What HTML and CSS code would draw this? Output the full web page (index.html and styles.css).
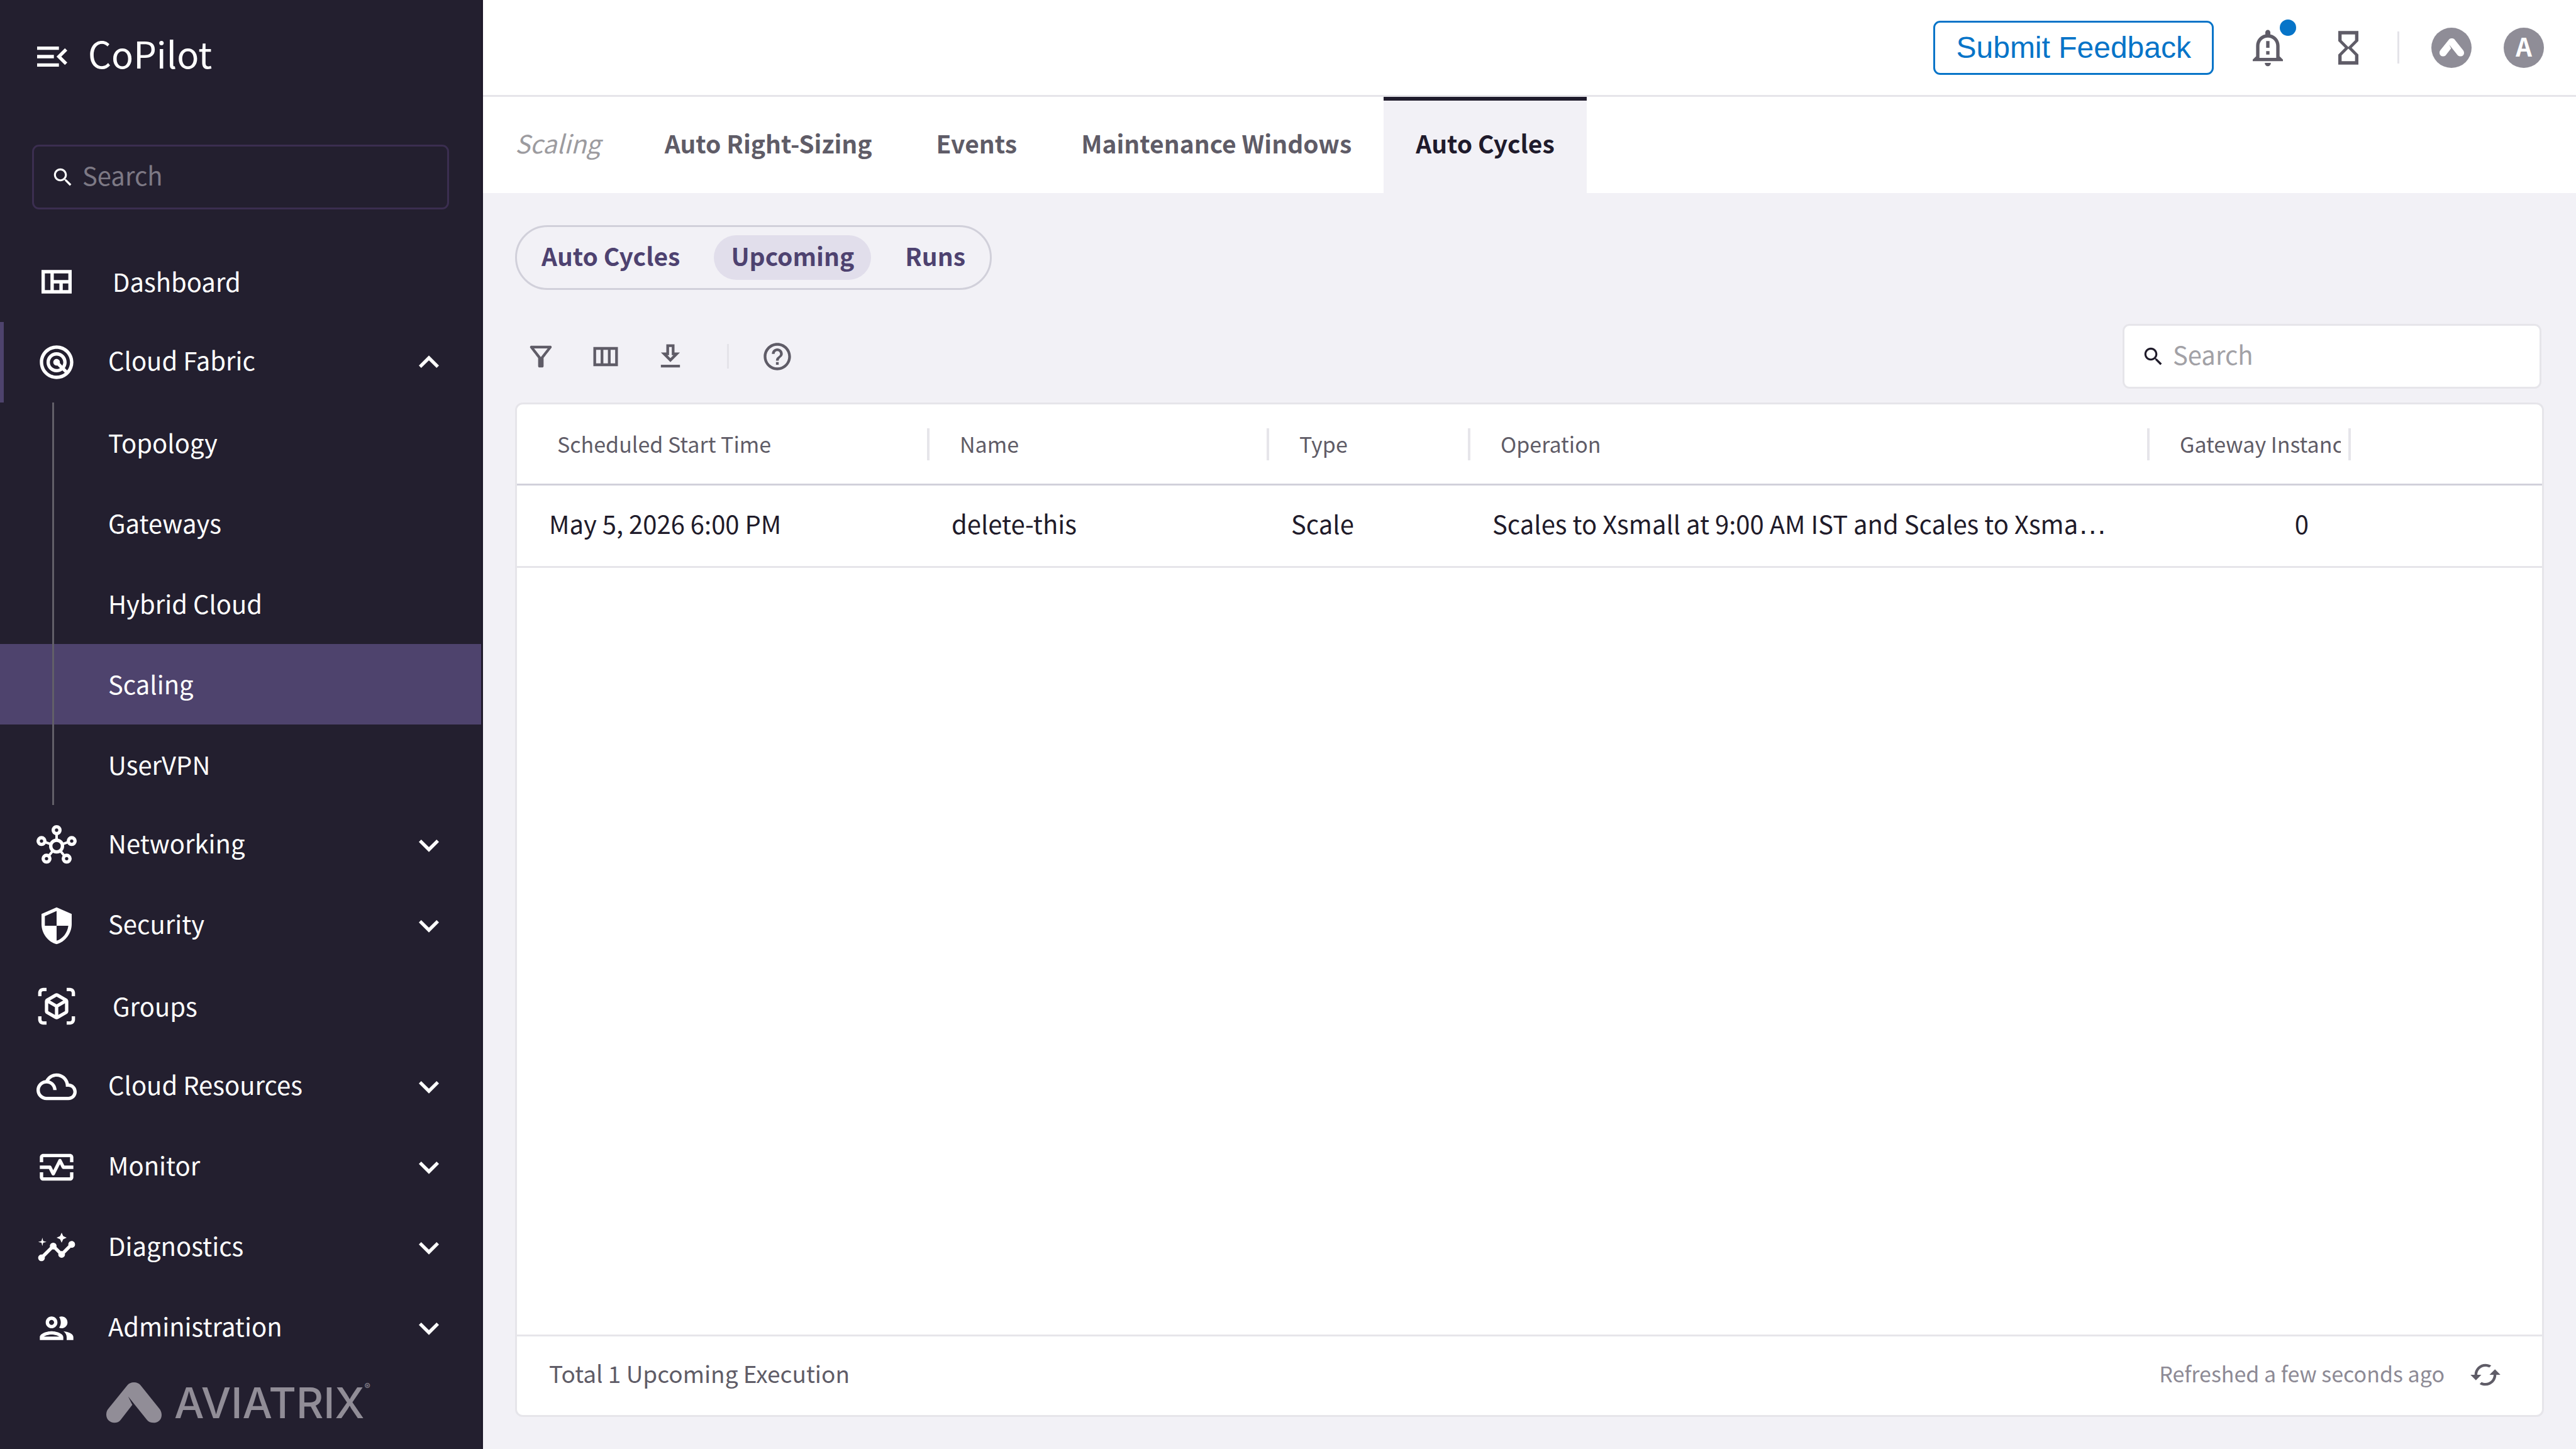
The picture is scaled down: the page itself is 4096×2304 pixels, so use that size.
FILE: index.html
```html
<!DOCTYPE html>
<html lang="en">
<head>
<meta charset="utf-8">
<title>CoPilot – Scaling</title>
<link rel="stylesheet" href="styles.css">
</head>
<body>
<svg class="defs" aria-hidden="true">
  <symbol id="search" viewBox="0 0 24 24"><path d="M15.5 14h-.79l-.28-.27C15.41 12.59 16 11.11 16 9.5 16 5.91 13.09 3 9.5 3S3 5.91 3 9.5 5.91 16 9.5 16c1.61 0 3.09-.59 4.23-1.57l.27.28v.79l5 4.99L20.49 19l-4.99-5zm-6 0C7.01 14 5 11.99 5 9.5S7.01 5 9.5 5 14 7.01 14 9.5 11.99 14 9.5 14z"/></symbol>
  <symbol id="chevron-down" viewBox="0 0 24 24"><path d="M7.41 8.59 12 13.17l4.59-4.58L18 10l-6 6-6-6z"/></symbol>
  <symbol id="chevron-up" viewBox="0 0 24 24"><path d="M12 8l-6 6 1.41 1.41L12 10.83l4.59 4.58L18 14z"/></symbol>
  <symbol id="mark" viewBox="0 0 88 65"><path d="M44 0C48.500 0 52 1.500 54.400 4.500L84.500 42C87 45 88 48.500 88 52C88 59 82.500 64.300 75.500 64.300C71 64.300 67 62.800 64.500 59.500L34.800 22.400L41.400 35.700L23 59.500C20.500 62.800 17 64.300 13 64.300C5.500 64.300 0 58.500 0 51.500C0 47.500 1 44.500 3.200 42L33.600 4.500C36 1.500 39.500 0 44 0Z"/></symbol>
</svg>
<div class="app">
  <aside class="sidebar">
    <div class="brand">
      <button class="icon-button" aria-label="Collapse menu"><svg class="icon" viewBox="0 0 24 24"><path d="M3 18h13v-2H3v2zm0-5h10v-2H3v2zm0-7v2h13V6H3zm18 9.590L17.420 12 21 8.410 19.590 7l-5 5 5 5L21 15.590z"/></svg></button>
      <span class="brand-name">CoPilot</span>
    </div>
    <label class="search search-dark">
      <svg class="search-icon"><use href="#search"/></svg>
      <input type="search" placeholder="Search" aria-label="Search menu">
    </label>
    <nav class="nav" aria-label="Main">
      <a class="nav-item nav-single" href="#dashboard"><svg class="icon" viewBox="0 0 24 24"><path d="M3 5v14h18V5H3zm2 12V7h3.330v10H5zm5.330 0v-4h3.330v4h-3.330zm5.340 0v-4H19v4h-3.330zM10.330 11V7H19v4h-8.670z"/></svg><span class="label">Dashboard</span></a>
      <button class="nav-item nav-open" aria-expanded="true"><svg class="icon" viewBox="0 0 24 24"><path d="M19.740 18.330C21.150 16.600 22 14.400 22 12c0-5.520-4.480-10-10-10S2 6.480 2 12s4.480 10 10 10c2.400 0 4.600-.85 6.330-2.260.27-.22.53-.46.78-.71.03-.03.05-.06.07-.08.2-.2.390-.410.560-.620zM12 20c-4.410 0-8-3.590-8-8s3.590-8 8-8 8 3.590 8 8c0 1.850-.63 3.540-1.690 4.900l-1.430-1.430c.69-.98 1.100-2.170 1.100-3.460 0-3.310-2.690-6-6-6s-6 2.690-6 6 2.690 6 6 6c1.300 0 2.510-.42 3.490-1.130l1.420 1.420C15.540 19.370 13.850 20 12 20zm1.920-7.490c.17-.66.02-1.380-.49-1.900l-.02-.02c-.77-.77-2-.78-2.780-.04-.01.01-.03.02-.05.04-.78.78-.78 2.050 0 2.830l.02.02c.52.51 1.250.67 1.910.49l1.510 1.510c-.6.36-1.290.58-2.040.58-2.210 0-4-1.790-4-4s1.790-4 4-4 4 1.790 4 4c0 .73-.21 1.410-.56 2l-1.500-1.510z"/></svg><span class="label">Cloud Fabric</span><svg class="icon"><use href="#chevron-up"/></svg></button>
      <div class="subnav">
        <a href="#topology">Topology</a>
        <a href="#gateways">Gateways</a>
        <a href="#hybrid-cloud">Hybrid Cloud</a>
        <a class="current" href="#scaling" aria-current="page">Scaling</a>
        <a href="#uservpn">UserVPN</a>
      </div>
      <button class="nav-item"><svg class="icon" viewBox="0 0 24 24"><g fill="none" stroke="currentColor" stroke-width="2"><circle cx="12" cy="12.500" r="3.500"/><circle cx="12" cy="3" r="2"/><circle cx="3" cy="9.500" r="2"/><circle cx="21" cy="9.500" r="2"/><circle cx="6" cy="20" r="2"/><circle cx="18" cy="20" r="2"/><path stroke-width="1.500" d="M12 5.500V8.500M5.500 10.300l2.900 1M18.500 10.300l-2.900 1M7.700 17.900l2-2.500M16.300 17.900l-2-2.500"/></g></svg><span class="label">Networking</span><svg class="icon"><use href="#chevron-down"/></svg></button>
      <button class="nav-item"><svg class="icon" viewBox="0 0 24 24"><path d="M12 1L3 5v6c0 5.550 3.840 10.740 9 12 5.160-1.260 9-6.450 9-12V5l-9-4zm0 10.990h7c-.53 4.120-3.280 7.790-7 8.940V12H5V6.300l7-3.110v8.800z"/></svg><span class="label">Security</span><svg class="icon"><use href="#chevron-down"/></svg></button>
      <a class="nav-item nav-single" href="#groups"><svg class="icon" viewBox="0 0 24 24"><path d="M3 4c0-.55.45-1 1-1h2V1H4C2.340 1 1 2.340 1 4v2h2V4zM3 20v-2H1v2c0 1.660 1.340 3 3 3h2v-2H4c-.55 0-1-.45-1-1zM20 1h-2v2h2c.55 0 1 .45 1 1v2h2V4c0-1.660-1.340-3-3-3zM21 20c0 .55-.45 1-1 1h-2v2h2c1.660 0 3-1.340 3-3v-2h-2v2zM19 14.870V9.130c0-.72-.38-1.380-1-1.730l-5-2.880c-.31-.18-.65-.27-1-.27s-.69.09-1 .27L6 7.390c-.62.36-1 1.020-1 1.740v5.740c0 .72.38 1.380 1 1.730l5 2.880c.31.18.65.27 1 .27s.69-.09 1-.27l5-2.880c.62-.35 1-1.010 1-1.730zm-8 2.300l-4-2.300v-4.630l4 2.330v4.600zm1-6.330L8.040 8.530 12 6.250l3.960 2.280L12 10.840zm5 4.030l-4 2.300v-4.600l4-2.330v4.630z"/></svg><span class="label">Groups</span></a>
      <button class="nav-item"><svg class="icon" viewBox="0 0 24 24"><path d="M19.350 10.040C18.670 6.590 15.640 4 12 4 9.110 4 6.610 5.640 5.360 8.040 2.350 8.360 0 10.900 0 14c0 3.310 2.690 6 6 6h13c2.760 0 5-2.240 5-5 0-2.640-2.050-4.780-4.650-4.960zM19 18H6c-2.210 0-4-1.790-4-4s1.790-4 4-4 4 1.790 4 4h2c0-2.760-1.860-5.080-4.400-5.780C8.610 6.880 10.200 6 12 6c3.030 0 5.500 2.470 5.500 5.500v.5H19c1.650 0 3 1.350 3 3s-1.350 3-3 3z"/></svg><span class="label">Cloud Resources</span><svg class="icon"><use href="#chevron-down"/></svg></button>
      <button class="nav-item"><svg class="icon" viewBox="0 0 24 24"><path d="M20 4H4c-1.100 0-2 .9-2 2v3h2V6h16v3h2V6c0-1.100-.9-2-2-2zm0 14H4v-3H2v3c0 1.100.9 2 2 2h16c1.100 0 2-.9 2-2v-3h-2v3zM14.890 7.550c-.34-.68-1.450-.68-1.790 0L10 13.760l-1.110-2.210C8.720 11.210 8.380 11 8 11H2v2h5.380l1.720 3.450c.18.34.52.55.9.55s.72-.21.89-.55L14 10.240l1.110 2.210c.17.34.51.55.89.55h6v-2h-5.380l-1.730-3.450z"/></svg><span class="label">Monitor</span><svg class="icon"><use href="#chevron-down"/></svg></button>
      <button class="nav-item"><svg class="icon" viewBox="0 0 24 24"><path d="M21 8c-1.450 0-2.260 1.440-1.930 2.510l-3.550 3.560c-.3-.09-.74-.09-1.040 0l-2.550-2.550C12.270 10.450 11.460 9 10 9c-1.450 0-2.270 1.440-1.930 2.520l-4.560 4.550C2.440 15.740 1 16.550 1 18c0 1.100.9 2 2 2 1.450 0 2.260-1.440 1.930-2.510l4.550-4.560c.3.09.74.09 1.040 0l2.550 2.550C12.730 16.550 13.540 18 15 18c1.450 0 2.270-1.440 1.930-2.520l3.560-3.550C21.560 12.260 23 11.450 23 10c0-1.100-.9-2-2-2zM15 9l.94-2.070L18 6l-2.060-.93L15 3l-.92 2.070L12 6l2.080.93zM3.500 11L4 9l2-.5L4 8l-.5-2L3 8l-2 .5L3 9z"/></svg><span class="label">Diagnostics</span><svg class="icon"><use href="#chevron-down"/></svg></button>
      <button class="nav-item"><svg class="icon" viewBox="0 0 24 24"><path d="M9 13.750c-2.340 0-7 1.170-7 3.500V19h14v-1.750c0-2.330-4.660-3.500-7-3.500zM4.340 17c.84-.58 2.870-1.250 4.660-1.250s3.820.67 4.660 1.250H4.340zM9 12c1.930 0 3.500-1.570 3.500-3.500S10.930 5 9 5 5.500 6.570 5.500 8.500 7.070 12 9 12zm0-5c.83 0 1.500.67 1.500 1.500S9.830 10 9 10s-1.500-.67-1.500-1.500S8.170 7 9 7zm7.040 6.810c1.160.84 1.960 1.960 1.960 3.440V19h4v-1.750c0-2.020-3.500-3.170-5.960-3.440zM15 12c1.930 0 3.500-1.570 3.500-3.500S16.930 5 15 5c-.54 0-1.040.13-1.500.35.63.89 1 1.980 1 3.150s-.37 2.260-1 3.150c.46.22.96.35 1.500.35z"/></svg><span class="label">Administration</span><svg class="icon"><use href="#chevron-down"/></svg></button>
    </nav>
    <div class="logo">
      <svg class="logo-mark"><use href="#mark"/></svg>
      <span class="logo-name">AVIATRIX<sup>®</sup></span>
    </div>
  </aside>
  <div class="page">
    <header class="topbar">
      <div class="topbar-actions">
        <button class="feedback">Submit Feedback</button>
        <div class="topbar-icons">
          <button class="icon-button bell" aria-label="Notifications"><svg class="icon" viewBox="0 0 24 24"><path fill-rule="evenodd" d="M12 1.300c-.83 0-1.500.67-1.500 1.500V4C7.400 4.600 5 7.400 5 10.800v6.300L3 19v1h18v-1l-2-1.900v-6.300C19 7.400 16.600 4.600 13.500 4V2.800c0-.83-.67-1.500-1.500-1.500zM17 18H7v-7.100c0-2.800 2.200-5 5-5s5 2.200 5 5V18zM11 8h2v4h-2zM11 14h2v2h-2zM10.200 21h3.600c0 1.200-.8 2-1.800 2s-1.800-.8-1.800-2z"/></svg></button>
          <button class="icon-button" aria-label="Tasks"><svg class="icon" viewBox="0 0 24 24"><path d="M6 2v6h.01L6 8.010 10 12l-4 4 .01.01H6V22h12v-5.990h-.01L18 16l-4-4 4-3.990-.01-.01H18V2H6zm10 14.500V20H8v-3.500l4-4 4 4zm-4-5l-4-4V4h8v3.500l-4 4z"/></svg></button>
        </div>
      </div>
      <div class="account">
        <span class="divider divider-tall"></span>
        <button class="avatar" aria-label="Aviatrix"><svg class="avatar-mark"><use href="#mark"/></svg></button>
        <button class="avatar avatar-letter">A</button>
      </div>
    </header>
    <nav class="tabs" aria-label="Scaling">
      <span class="tab tab-title">Scaling</span>
      <a class="tab" href="#right-sizing">Auto Right-Sizing</a>
      <a class="tab" href="#events">Events</a>
      <a class="tab" href="#maintenance">Maintenance Windows</a>
      <a class="tab tab-active" href="#auto-cycles" aria-current="page">Auto Cycles</a>
    </nav>
    <main class="content">
      <div class="segments">
        <button class="segment">Auto Cycles</button>
        <button class="segment segment-active">Upcoming</button>
        <button class="segment">Runs</button>
      </div>
      <div class="toolbar">
        <div class="tools">
          <button class="icon-button" aria-label="Filter"><svg class="icon-small" viewBox="0 0 24 24"><path d="M7 6h10l-5.010 6.300L7 6zm-2.750-.39C6.270 8.200 10 13 10 13v6c0 .55.45 1 1 1h2c.55 0 1-.45 1-1v-6s3.720-4.800 5.740-7.390c.51-.66.04-1.610-.79-1.610H5.040c-.83 0-1.300.95-.79 1.610z"/></svg></button>
          <button class="icon-button" aria-label="Columns"><svg class="icon-small" viewBox="0 0 24 24"><path d="M3 5v14h18V5H3zm5.330 12H5V7h3.330v10zm5.340 0h-3.330V7h3.330v10zM19 17h-3.330V7H19v10z"/></svg></button>
          <button class="icon-button" aria-label="Download"><svg class="icon-small" viewBox="0 0 24 24"><path d="M19 9h-4V3H9v6H5l7 7 7-7zm-8 2V5h2v6h1.170L12 13.170 9.830 11H11zm-6 7h14v2H5z"/></svg></button>
        </div>
        <span class="divider"></span>
        <button class="icon-button" aria-label="Help"><svg class="icon-small" viewBox="0 0 24 24"><path d="M11 18h2v-2h-2v2zm1-16C6.480 2 2 6.480 2 12s4.480 10 10 10 10-4.480 10-10S17.520 2 12 2zm0 18c-4.410 0-8-3.590-8-8s3.590-8 8-8 8 3.590 8 8-3.590 8-8 8zm0-14c-2.210 0-4 1.790-4 4h2c0-1.100.9-2 2-2s2 .9 2 2c0 2-3 1.750-3 5h2c0-2.250 3-2.500 3-5 0-2.210-1.790-4-4-4z"/></svg></button>
        <label class="search search-light">
          <svg class="search-icon"><use href="#search"/></svg>
          <input type="search" placeholder="Search" aria-label="Search executions">
        </label>
      </div>
      <section class="card">
        <table class="grid">
          <colgroup><col class="col-time"><col class="col-name"><col class="col-type"><col class="col-operation"><col class="col-count"><col></colgroup>
          <thead>
            <tr>
              <th><div class="head">Scheduled Start Time</div></th>
              <th><div class="head">Name</div></th>
              <th><div class="head">Type</div></th>
              <th><div class="head">Operation</div></th>
              <th><div class="head">Gateway Instances</div></th>
              <th><div class="head"></div></th>
            </tr>
          </thead>
          <tbody>
            <tr>
              <td>May 5, 2026 6:00 PM</td>
              <td>delete-this</td>
              <td>Scale</td>
              <td>Scales to Xsmall at 9:00 AM IST and Scales to Xsma<span class="more">…</span></td>
              <td class="number">0</td>
              <td></td>
            </tr>
          </tbody>
        </table>
        <footer class="card-footer">
          <span class="total">Total 1 Upcoming Execution</span>
          <div class="refresh">
            <span class="refreshed">Refreshed a few seconds ago</span>
            <button class="icon-button" aria-label="Refresh"><svg class="icon-small" viewBox="0 0 24 24"><path d="M19 8l-4 4h3c0 3.310-2.690 6-6 6-1.010 0-1.970-.25-2.800-.7l-1.460 1.460C8.970 19.540 10.430 20 12 20c4.420 0 8-3.580 8-8h3l-4-4zM6 12c0-3.310 2.690-6 6-6 1.010 0 1.970.25 2.800.7l1.460-1.460C15.030 4.460 13.570 4 12 4c-4.420 0-8 3.580-8 8H1l4 4 4-4H6z"/></svg></button>
          </div>
        </footer>
      </section>
    </main>
  </div>
</div>
</body>
</html>
```
FILE: styles.css
```css
:root {
  --night: #231f2f;
  --violet: #4e436d;
  --blue: #0674c8;
  --slate: #5f5c67;
  --line: #e6e5ea;
  --line-strong: #d1d0da;
  --ground: #f2f1f6;
}

* {
  box-sizing: border-box;
}

body {
  margin: 0;
  font-family: "Noto Sans CJK SC", "Source Sans Pro", sans-serif;
  font-size: 40px;
  line-height: 56px;
  color: #1f1b2a;
  background: var(--ground);
}

a {
  color: inherit;
  text-decoration: none;
}

button {
  padding: 0;
  border: 0;
  background: none;
  font: inherit;
  color: inherit;
  text-align: left;
}

svg {
  display: block;
  fill: currentColor;
}

.defs {
  display: none;
}

.icon {
  flex: none;
  width: 64px;
  height: 64px;
}

.icon-small {
  width: 52px;
  height: 52px;
}

.icon-button {
  display: block;
  color: inherit;
}

.app {
  display: flex;
  min-height: 100vh;
}

/* Sidebar */

.sidebar {
  display: flex;
  flex: none;
  flex-direction: column;
  width: 768px;
  border-right: 3px solid #1f1a2b;
  background: var(--night);
  color: #fff;
}

.brand {
  display: flex;
  align-items: center;
  gap: 25px;
  padding: 58px 51px 108px;
}

.brand-name {
  height: 64px;
  font-size: 58px;
  line-height: 52px;
}

.search {
  display: flex;
  align-items: center;
  gap: 12px;
  height: 103px;
  padding: 0 27px;
  border: 3px solid;
  border-radius: 11px;
}

.search-icon {
  flex: none;
  width: 38px;
  height: 38px;
}

.search input {
  flex: 1;
  min-width: 0;
  padding: 0 0 8px;
  border: 0;
  outline: 0;
  background: none;
  font: inherit;
  color: inherit;
}

.search-dark {
  margin: 0 51px 51px;
  border-color: #3b2e50;
}

.search-dark input::placeholder {
  color: #7d7985;
}

.nav-item {
  display: flex;
  align-items: center;
  width: 100%;
  height: 128px;
  padding-right: 51px;
  padding-left: 52px;
  border-left: 6px solid transparent;
}

.nav-open {
  border-left-color: var(--violet);
}

.label {
  flex: 1;
  padding-bottom: 8px;
  padding-left: 50px;
}

.nav-single .label {
  padding-bottom: 3px;
  padding-left: 57px;
}

.subnav {
  position: relative;
}

.subnav::before {
  position: absolute;
  top: 0;
  bottom: 0;
  left: 83px;
  width: 3px;
  background: #625f68;
  content: "";
}

.subnav a {
  display: flex;
  align-items: center;
  height: 128px;
  padding-bottom: 2px;
  padding-left: 172px;
}

.subnav .current {
  background: var(--violet);
}

.logo {
  display: flex;
  align-items: center;
  gap: 20px;
  margin-top: auto;
  padding: 0 51px 41px 169px;
  color: #918d97;
}

.logo-mark {
  flex: none;
  width: 88px;
  height: 65px;
}

.logo-name {
  font-family: Inter, sans-serif;
  font-size: 67px;
  font-weight: 500;
  line-height: 65px;
  white-space: nowrap;
}

.logo-name sup {
  font-size: 14px;
  line-height: 14px;
  vertical-align: top;
}

/* Top bar and tabs */

.page {
  display: flex;
  flex: 1;
  flex-direction: column;
  min-width: 0;
}

.topbar {
  display: flex;
  align-items: center;
  justify-content: flex-end;
  gap: 46px;
  height: 154px;
  padding-right: 51px;
  border-bottom: 3px solid var(--line);
  background: #fff;
  color: var(--slate);
}

.topbar-actions {
  display: flex;
  align-items: center;
  gap: 54px;
}

.topbar-icons {
  display: flex;
  gap: 64px;
}

.account {
  display: flex;
  align-items: center;
  gap: 51px;
}

.feedback {
  padding: 12px 33px;
  border: 3px solid var(--blue);
  border-radius: 11px;
  font-family: "Liberation Sans", sans-serif;
  font-size: 48px;
  color: var(--blue);
}

.bell {
  position: relative;
}

.bell::after {
  position: absolute;
  top: -13px;
  right: -13px;
  width: 26px;
  height: 26px;
  border-radius: 50%;
  background: var(--blue);
  content: "";
}

.divider {
  width: 3px;
  height: 39px;
  background: #e4e3e9;
}

.divider-tall {
  height: 51px;
}

.avatar {
  display: flex;
  align-items: center;
  justify-content: center;
  width: 64px;
  height: 64px;
  border-radius: 50%;
  background: #8f8d97;
  color: #fff;
}

.avatar-letter {
  padding-bottom: 6px;
  font-weight: 700;
}

.avatar-mark {
  width: 39px;
  height: 29px;
}

.tabs {
  display: flex;
  height: 153px;
  background: #fff;
  font-size: 39px;
  font-weight: 700;
  color: var(--slate);
}

.tab {
  padding: 45px 51px 0;
}

.tab-title {
  font-size: 40px;
  font-style: italic;
  font-weight: 400;
  color: #9c9b9f;
}

.tab-active {
  background: var(--ground);
  box-shadow: inset 0 6px #1f1b2c;
  color: #1f1b2c;
}

/* Content */

.content {
  display: flex;
  flex: 1;
  flex-direction: column;
  padding: 51px;
}

.segments {
  display: flex;
  align-self: flex-start;
  gap: 27px;
  margin-bottom: 54px;
  padding: 13px 12px;
  border: 3px solid var(--line-strong);
  border-radius: 52px;
}

.segment {
  padding: 4px 27px 11px;
  border-radius: 36px;
  font-size: 39px;
  font-weight: 700;
  color: #4e4270;
}

.segment-active {
  background: #e1deeb;
}

.toolbar {
  display: flex;
  align-items: center;
  gap: 51px;
  margin-bottom: 22px;
  padding: 0 4px 0 15px;
  color: var(--slate);
}

.tools {
  display: flex;
  gap: 51px;
  padding-right: 13px;
}

.search-light {
  width: 666px;
  margin-left: auto;
  border-color: var(--line);
  background: #fff;
  color: #1f1b2a;
}

.search-light input::placeholder {
  color: #a2a1a6;
}

.card {
  display: flex;
  flex: 1;
  flex-direction: column;
  justify-content: space-between;
  border: 3px solid var(--line);
  border-radius: 12px;
  background: #fff;
}

.grid {
  width: 100%;
  border-collapse: collapse;
  table-layout: fixed;
}

.col-time {
  width: 640px;
}

.col-name {
  width: 540px;
}

.col-type,
.col-count {
  width: 320px;
}

.col-operation {
  width: 1080px;
}

th {
  padding: 0;
  border-bottom: 3px solid var(--line-strong);
}

.head {
  display: flex;
  align-items: center;
  height: 126px;
  padding-left: 12px;
  overflow: hidden;
  font-size: 34px;
  font-weight: 400;
  white-space: nowrap;
  color: var(--slate);
}

.head::before {
  flex: none;
  width: 4px;
  height: 51px;
  margin-right: 48px;
  background: var(--line);
  content: "";
}

th:first-child .head::before {
  background: none;
}

td {
  height: 131px;
  padding: 0 51px 8px;
  overflow: hidden;
  border-bottom: 3px solid var(--line);
  white-space: nowrap;
}

.more {
  font-family: "Liberation Sans", sans-serif;
  font-size: 46px;
}

.number {
  text-align: right;
}

.card-footer {
  display: flex;
  align-items: center;
  justify-content: space-between;
  height: 128px;
  padding: 0 64px 3px 51px;
  border-top: 3px solid var(--line);
  color: var(--slate);
}

.total {
  padding-bottom: 7px;
  font-size: 37px;
}

.refresh {
  display: flex;
  align-items: center;
  gap: 39px;
}

.refreshed {
  padding-bottom: 4px;
  font-size: 34px;
  color: #8d8a95;
}
```
